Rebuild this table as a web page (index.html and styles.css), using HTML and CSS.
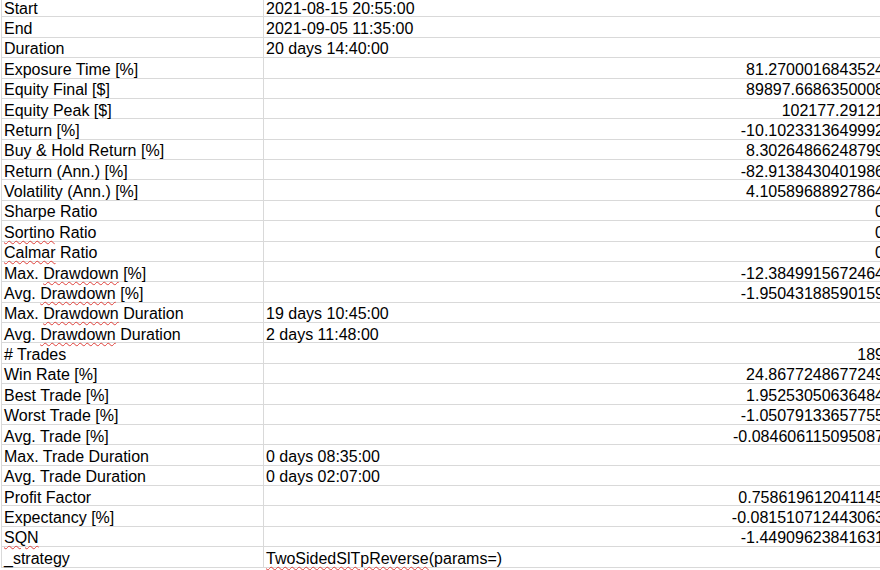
FILE: index.html
```html
<!DOCTYPE html>
<html>
<head>
<meta charset="utf-8">
<link rel="stylesheet" href="styles.css">
</head>
<body>
<div class="sheet">
  <div class="c a">Start</div><div class="c b">2021-08-15 20:55:00</div>
  <div class="c a">End</div><div class="c b">2021-09-05 11:35:00</div>
  <div class="c a">Duration</div><div class="c b">20 days 14:40:00</div>
  <div class="c a">Exposure Time [%]</div><div class="c b n">81.2700016843524</div>
  <div class="c a">Equity Final [$]</div><div class="c b n">89897.6686350008</div>
  <div class="c a">Equity Peak [$]</div><div class="c b n">102177.29121</div>
  <div class="c a">Return [%]</div><div class="c b n">-10.1023313649992</div>
  <div class="c a">Buy &amp; Hold Return [%]</div><div class="c b n">8.30264866248799</div>
  <div class="c a">Return (Ann.) [%]</div><div class="c b n">-82.9138430401986</div>
  <div class="c a">Volatility (Ann.) [%]</div><div class="c b n">4.10589688927864</div>
  <div class="c a">Sharpe Ratio</div><div class="c b n">0</div>
  <div class="c a"><span class="sp">Sortino</span> Ratio</div><div class="c b n">0</div>
  <div class="c a"><span class="sp">Calmar</span> Ratio</div><div class="c b n">0</div>
  <div class="c a">Max. <span class="sp">Drawdown</span> [%]</div><div class="c b n">-12.3849915672464</div>
  <div class="c a">Avg. <span class="sp">Drawdown</span> [%]</div><div class="c b n">-1.95043188590159</div>
  <div class="c a">Max. <span class="sp">Drawdown</span> Duration</div><div class="c b">19 days 10:45:00</div>
  <div class="c a">Avg. <span class="sp">Drawdown</span> Duration</div><div class="c b">2 days 11:48:00</div>
  <div class="c a"># Trades</div><div class="c b n">189</div>
  <div class="c a">Win Rate [%]</div><div class="c b n">24.8677248677249</div>
  <div class="c a">Best Trade [%]</div><div class="c b n">1.95253050636484</div>
  <div class="c a">Worst Trade [%]</div><div class="c b n">-1.05079133657755</div>
  <div class="c a">Avg. Trade [%]</div><div class="c b n">-0.084606115095087</div>
  <div class="c a">Max. Trade Duration</div><div class="c b">0 days 08:35:00</div>
  <div class="c a">Avg. Trade Duration</div><div class="c b">0 days 02:07:00</div>
  <div class="c a">Profit Factor</div><div class="c b n">0.758619612041145</div>
  <div class="c a">Expectancy [%]</div><div class="c b n">-0.081510712443063</div>
  <div class="c a"><span class="sp">SQN</span></div><div class="c b n">-1.44909623841631</div>
  <div class="c a">_strategy</div><div class="c b"><span class="sp">TwoSidedSlTpReverse</span>(params=)</div>
</div>
</body>
</html>
```

FILE: styles.css
```css
html, body {
  margin: 0;
  padding: 0;
  background: #ffffff;
  overflow: hidden;
  width: 880px;
  height: 570px;
}

.sheet {
  display: grid;
  grid-template-columns: 262px 621px;
  grid-auto-rows: 20.375px;
  margin-top: -2.9px;
  margin-left: 1px;
  border-left: 1px solid #d9d9d9;
  width: 883px;
  font-family: "Liberation Sans", Arial, sans-serif;
  font-size: 16px;
  color: #000000;
}

.c {
  box-sizing: border-box;
  border-bottom: 1px solid #d9d9d9;
  line-height: 18px;
  padding-top: 2.6px;
  white-space: nowrap;
  overflow: visible;
}

.a {
  border-right: 1px solid #d9d9d9;
  padding-left: 2px;
}

.b {
  padding-left: 2px;
}

.n {
  text-align: right;
  padding-right: 1px;
}

.sp {
  text-decoration: underline wavy #e0403a;
  text-decoration-thickness: 1px;
  text-underline-offset: 2px;
}
```
